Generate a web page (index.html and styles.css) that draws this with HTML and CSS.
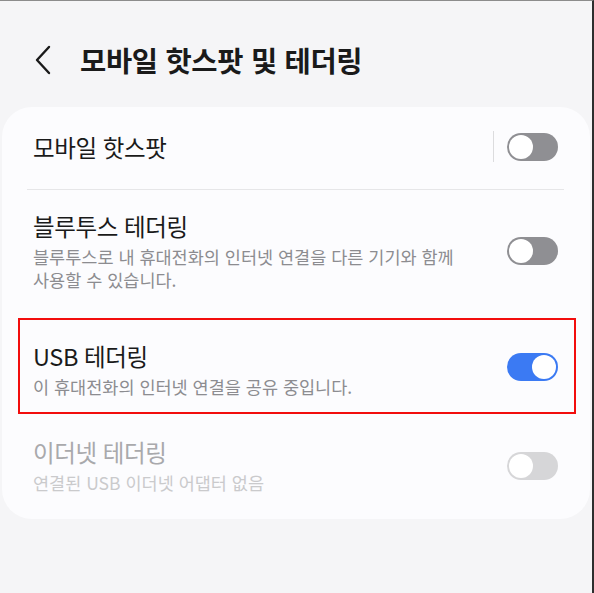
FILE: index.html
```html
<!DOCTYPE html>
<html lang="ko">
<head>
	<meta charset="UTF-8">
	<title>모바일 핫스팟 및 테더링</title>
	<link rel="stylesheet" href="styles.css">
</head>
<body>
	<div class="screen">
		<!--상단 제목-->
		<div class="top">
			<svg class="back" width="18" height="30" viewBox="0 0 18 30">
				<polyline points="15,2 3,15 15,28" fill="none" stroke="#1a1a1a" stroke-width="2.4" stroke-linecap="round" stroke-linejoin="round"/>
			</svg>
			<h1>모바일 핫스팟 및 테더링</h1>
		</div>

		<!--설정 카드-->
		<div class="card">
			<div class="row first">
				<div class="txt">
					<div class="tit">모바일 핫스팟</div>
				</div>
				<span class="bar"></span>
				<span class="sw"></span>
			</div>
			<div class="line"></div>

			<div class="row second">
				<div class="txt">
					<div class="tit">블루투스 테더링</div>
					<div class="sub">블루투스로 내 휴대전화의 인터넷 연결을 다른 기기와 함께<br>사용할 수 있습니다.</div>
				</div>
				<span class="sw"></span>
			</div>

			<div class="row mark">
				<div class="txt">
					<div class="tit">USB 테더링</div>
					<div class="sub">이 휴대전화의 인터넷 연결을 공유 중입니다.</div>
				</div>
				<span class="sw on"></span>
			</div>

			<div class="row last off">
				<div class="txt">
					<div class="tit">이더넷 테더링</div>
					<div class="sub">연결된 USB 이더넷 어댑터 없음</div>
				</div>
				<span class="sw dis"></span>
			</div>
		</div>
	</div>
</body>
</html>
```

FILE: styles.css
```css
*{
	padding: 0;
	margin: 0;
	box-sizing: border-box;
}
body{
	background-color: #f5f5f7;
	font-family: "Noto Sans CJK KR", "Noto Sans", sans-serif;
	color: #1a1a1a;
}
.screen{
	width: 594px;
	height: 593px;
	border-top: 1px solid #8c8c8c;
	border-right: 2px solid #2e2e2e;
	background-color: #f5f5f7;
	overflow: hidden;
}
.top{
	height: 106px;
	display: flex;
	align-items: center;
	padding-left: 34px;
	padding-top: 12px;
}
.back{
	display: block;
	margin-right: 28px;
}
.top h1{
	font-size: 28.5px;
	font-weight: 700;
	letter-spacing: -0.3px;
	line-height: 36px;
}
.card{
	margin: 0 0 0 2px;
	width: 588px;
	background-color: #fcfcfe;
	border-radius: 30px;
}
.row{
	display: flex;
	align-items: center;
	padding: 0 32px 0 31px;
}
.txt{
	flex: 1;
}
.tit{
	font-size: 23.5px;
	line-height: 30px;
	letter-spacing: -0.4px;
}
.sub{
	margin-top: 4px;
	font-size: 17.5px;
	line-height: 23px;
	color: #8c8c90;
}
.first{
	padding-top: 24px;
	padding-bottom: 27px;
}
.bar{
	width: 1px;
	height: 31px;
	background-color: #dcdcde;
	margin-right: 13px;
}
.line{
	height: 1px;
	margin: 0 26px 0 25px;
	background-color: #e6e6e8;
}
.second{
	padding-top: 21px;
	padding-bottom: 13px;
}
.mark{
	margin: 14px 14px 0 16px;
	border: 2px solid #f20d0d;
	padding: 21px 16px 14px 13px;
}
.mark .sw{
	margin-bottom: 6px;
}
.last{
	padding-top: 23px;
	padding-bottom: 25px;
}
.off .tit{
	color: #a9a9ac;
}
.off .sub{
	color: #cacacc;
}
.sw{
	width: 51px;
	height: 28px;
	border-radius: 14px;
	background-color: #8f8f93;
	position: relative;
}
.sw::after{
	content: "";
	position: absolute;
	top: 2px;
	left: 2px;
	width: 24px;
	height: 24px;
	border-radius: 50%;
	background-color: #fff;
}
.sw.on{
	background-color: #3b7af3;
}
.sw.on::after{
	left: 25px;
}
.sw.dis{
	background-color: #d6d6d8;
}
```
